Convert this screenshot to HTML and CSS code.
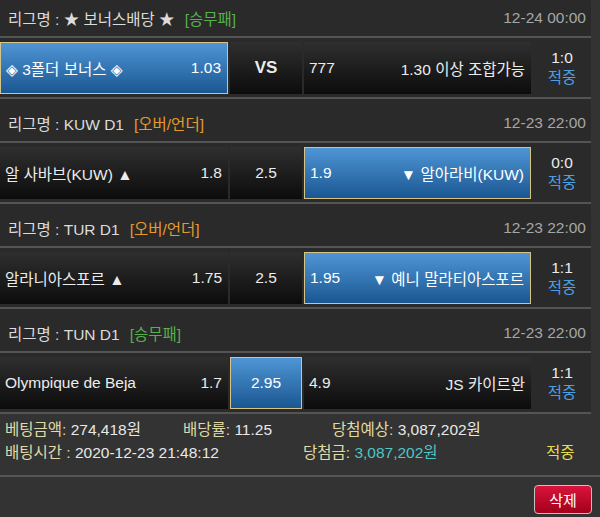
FILE: index.html
```html
<!DOCTYPE html>
<html lang="ko">
<head>
<meta charset="utf-8">
<title>베팅내역</title>
<link rel="stylesheet" href="styles.css">
</head>
<body>
<div class="page">
  <div class="list">
    <section class="game">
      <div class="league">
        <span class="lname">리그명 : ★ 보너스배당 ★</span>
        <span class="type green">[승무패]</span>
        <span class="date">12-24 00:00</span>
      </div>
      <div class="row">
        <div class="cell pick"><span>◈ 3폴더 보너스 ◈</span><span>1.03</span></div>
        <div class="cell mid vs">VS</div>
        <div class="cell"><span>777</span><span>1.30 이상 조합가능</span></div>
        <div class="score"><span>1:0</span><span class="hit">적중</span></div>
      </div>
    </section>
    <section class="game">
      <div class="league">
        <span class="lname">리그명 : KUW D1</span>
        <span class="type orange">[오버/언더]</span>
        <span class="date">12-23 22:00</span>
      </div>
      <div class="row">
        <div class="cell"><span>알 사바브(KUW) ▲</span><span>1.8</span></div>
        <div class="cell mid">2.5</div>
        <div class="cell pick"><span>1.9</span><span>▼ 알아라비(KUW)</span></div>
        <div class="score"><span>0:0</span><span class="hit">적중</span></div>
      </div>
    </section>
    <section class="game">
      <div class="league">
        <span class="lname">리그명 : TUR D1</span>
        <span class="type orange">[오버/언더]</span>
        <span class="date">12-23 22:00</span>
      </div>
      <div class="row">
        <div class="cell"><span>알라니아스포르 ▲</span><span>1.75</span></div>
        <div class="cell mid">2.5</div>
        <div class="cell pick"><span>1.95</span><span>▼ 예니 말라티아스포르</span></div>
        <div class="score"><span>1:1</span><span class="hit">적중</span></div>
      </div>
    </section>
    <section class="game">
      <div class="league">
        <span class="lname">리그명 : TUN D1</span>
        <span class="type green">[승무패]</span>
        <span class="date">12-23 22:00</span>
      </div>
      <div class="row">
        <div class="cell"><span>Olympique de Beja</span><span>1.7</span></div>
        <div class="cell mid pick">2.95</div>
        <div class="cell"><span>4.9</span><span>JS 카이르완</span></div>
        <div class="score"><span>1:1</span><span class="hit">적중</span></div>
      </div>
    </section>
  </div>
  <div class="info">
    <div class="line">
      <span class="c1"><span class="lbl">베팅금액:</span> 274,418원</span>
      <span class="c2"><span class="lbl">배당률:</span> 11.25</span>
      <span><span class="lbl">당첨예상:</span> 3,087,202원</span>
    </div>
    <div class="line">
      <span class="d1"><span class="lbl">배팅시간 :</span> 2020-12-23 21:48:12</span>
      <span class="d2"><span class="lbl">당첨금:</span> <span class="win">3,087,202원</span></span>
      <span class="result">적중</span>
    </div>
  </div>
  <div class="actions">
    <button class="del" type="button">삭제</button>
  </div>
</div>
</body>
</html>
```

FILE: styles.css
```css
html, body {
  margin: 0;
  padding: 0;
}
body {
  background: #333333;
  color: #e8e8e8;
  font-family: "Liberation Sans", "Noto Sans CJK KR", "DejaVu Sans", sans-serif;
  font-size: 15.5px;
  overflow: hidden;
}
.page {
  width: 600px;
  height: 517px;
  overflow: hidden;
}
.list {
  width: 591px;
  background: #2a2a2a;
  margin-top: -6px;
}
.league {
  display: flex;
  align-items: center;
  height: 44px;
  box-sizing: border-box;
  padding: 6px 5px 0 8px;
  border-bottom: 2px solid #545454;
  color: #dcdcdc;
}
.type {
  margin-left: 10px;
}
.green { color: #56b14a; }
.orange { color: #e79a2c; }
.date {
  margin-left: auto;
  color: #a6a6a6;
}
.row {
  display: grid;
  grid-template-columns: 228px 72px 227px 1fr;
  column-gap: 2px;
  padding: 4px 0 3px;
  border-bottom: 2px solid #545454;
}
.cell {
  height: 52px;
  box-sizing: border-box;
  display: flex;
  align-items: center;
  justify-content: space-between;
  padding: 0 6px 0 5px;
  background: linear-gradient(#2f2f2f, #0c0c0c);
  color: #ececec;
  white-space: nowrap;
}
.cell.pick {
  background: linear-gradient(#4f95d5, #1a5792);
  border: 1px solid #d6c387;
  color: #ffffff;
}
.cell.mid {
  justify-content: center;
  padding: 0;
}
.vs {
  font-weight: bold;
  font-size: 17px;
}
.score {
  display: flex;
  flex-direction: column;
  align-items: center;
  justify-content: center;
  line-height: 20px;
  color: #ececec;
}
.hit {
  color: #4b9fe2;
}
.info {
  padding: 4px 5px 11px;
  border-bottom: 2px solid #565656;
}
.line {
  display: flex;
  line-height: 23px;
  white-space: nowrap;
}
.lbl { color: #e2daa3; }
.c1 { width: 178px; }
.c2 { width: 149px; }
.d1 { width: 298px; }
.d2 { width: 243px; }
.win { color: #4ec6c6; }
.result { color: #e6dc4e; }
.actions {
  display: flex;
  justify-content: flex-end;
  padding: 8px 8px 0;
}
.del {
  width: 58px;
  height: 29px;
  background: linear-gradient(#d9143c, #a3001b);
  border: 1px solid #c4c4c4;
  border-radius: 4px;
  color: #ffffff;
  font-family: "Liberation Sans", "Noto Sans CJK KR", sans-serif;
  font-size: 15px;
  padding: 0;
}
```
